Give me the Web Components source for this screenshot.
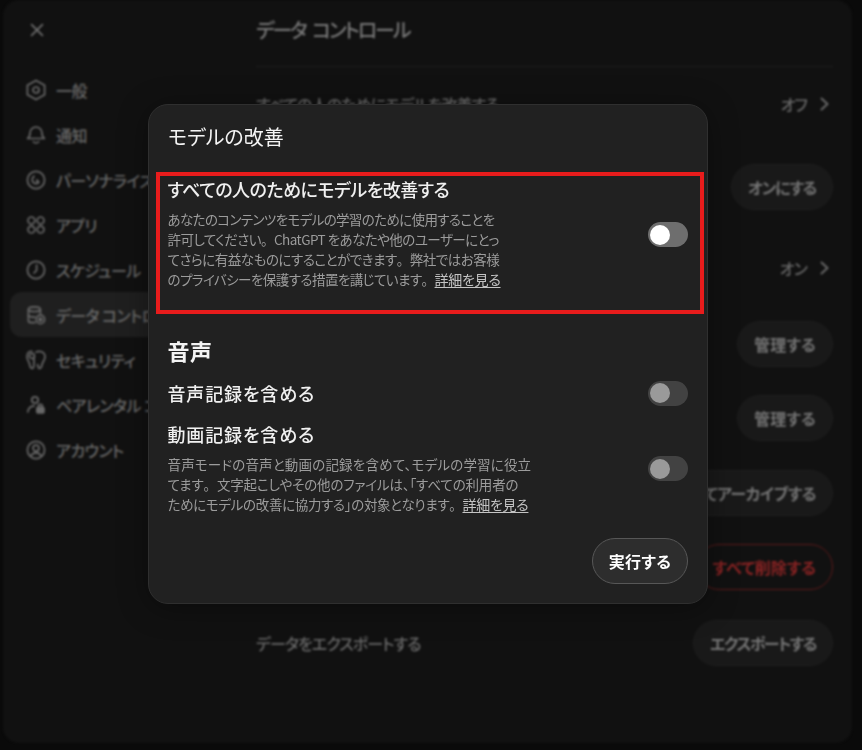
<!DOCTYPE html>
<html lang="ja">
<head>
<meta charset="utf-8">
<title>データ コントロール</title>
<style>
    html, body {
        margin: 0;
        height: 100%;
        background: #0a0a0a;
        overflow: hidden;
        font-family: "Noto Sans CJK JP", "Noto Sans", sans-serif;
        font-feature-settings: "palt";
    }
    a { font-size: 14px; letter-spacing: -.3px; color: #c4c4c4; text-decoration: underline; text-underline-offset: 2px; }
    /* each description line gets its own tracking, the kana run narrower than in Noto */
    .l1 { letter-spacing: -.63px; }
    .l2 { letter-spacing: -.53px; }
    .l3 { letter-spacing: -.48px; }
    .l4 { letter-spacing: -.55px; }
    .l5 { letter-spacing: .18px; }
    .l6 { letter-spacing: -.14px; }
    .l7 { letter-spacing: -.32px; }
    /* the full stop keeps its full width in the reference */
    .fw { font-feature-settings: "palt" 0; }
</style>
</head>
<body>
<app-screen>
    <settings-panel>
        <nav-item slot="nav" label="一般"><svg viewBox="0 0 20 20"><path d="M10 .4l8.6 4.8v9.6L10 19.6l-8.6-4.8V5.2z"/><circle cx="10" cy="10" r="3"/></svg></nav-item>
        <nav-item slot="nav" label="通知"><svg viewBox="0 0 20 20"><path d="M1.6 13.5c2-1.4 2.4-3 2.4-5.5a6 6 0 0 1 12 0c0 2.5.4 4.1 2.4 5.5z"/><path d="M7.3 16.8c1.4 1.6 4 1.6 5.4 0"/></svg></nav-item>
        <nav-item slot="nav" label="パーソナライズ"><svg viewBox="0 0 20 20"><circle cx="10" cy="10" r="8.6"/><path d="M8 6.2c-2.2 1.6-2.4 5-.3 6.6 1.6 1.2 3.8.9 5-.4M11 9.8v1.6h1.6"/></svg></nav-item>
        <nav-item slot="nav" label="アプリ"><svg viewBox="0 0 20 20"><circle cx="5.4" cy="5.4" r="3.4"/><circle cx="14.6" cy="5.4" r="3.4"/><circle cx="5.4" cy="14.6" r="3.4"/><circle cx="14.6" cy="14.6" r="3.4"/></svg></nav-item>
        <nav-item slot="nav" label="スケジュール"><svg viewBox="0 0 20 20"><circle cx="10" cy="10" r="8.6"/><path d="M10.6 5v5.4L8 13"/></svg></nav-item>
        <nav-item slot="nav" label="データ コントロ" active><svg viewBox="0 0 20 20"><path d="M9 17.6H5c-1.6 0-2.6-.8-2.6-2V4.4c0-1.6 2.4-2.6 6-2.6s6 1 6 2.6v3.8"/><path d="M2.4 5c1.4 2 10.6 2 12 0M2.4 10.5c1.2 1.4 4 1.8 6.4 1.6"/><circle cx="14.4" cy="14.4" r="4.2"/><circle cx="14.4" cy="14.4" r="1.4" fill="currentColor"/></svg></nav-item>
        <nav-item slot="nav" label="セキュリティ"><svg viewBox="0 0 20 20"><path d="M6 1.5C2.5 1 .8 3.5 1 7c.2 3 2 4.5 2.5 7 .4 2 1 4.5 2.7 4.5 1.6 0 1.8-3 1.8-5v-5"/><path d="M10 2c3-1.2 9-1 9 5 0 3-2.2 4.5-2.8 7-.5 2-.8 4.5-2.6 4.5-1.5 0-1.6-2.5-2-4"/><circle cx="6" cy="6" r="2.5"/></svg></nav-item>
        <nav-item slot="nav" label="ペアレンタル コ"><svg viewBox="0 0 20 20"><circle cx="9" cy="5" r="3.2"/><path d="M1.8 17c.4-3.6 3-6 6.4-6.2"/><rect x="10.8" y="12.4" width="7.2" height="5.6" rx="1.8" fill="currentColor"/><path d="M12.4 12.4v-1a2 2 0 0 1 4 0v1"/></svg></nav-item>
        <nav-item slot="nav" label="アカウント"><svg viewBox="0 0 20 20"><circle cx="10" cy="10" r="8.6"/><circle cx="10" cy="8.2" r="3"/><path d="M4.8 15.8c1.2-2.2 3-3 5.2-3s4 .8 5.2 3"/></svg></nav-item>

        <setting-row label="すべての人のためにモデルを改善する" value="オフ"></setting-row>
        <setting-row><pill-button style="--ls: -1.3px">オンにする</pill-button></setting-row>
        <setting-row value="オン"></setting-row>
        <setting-row><pill-button style="--ls: .25px">管理する</pill-button></setting-row>
        <setting-row><pill-button style="--ls: .25px">管理する</pill-button></setting-row>
        <setting-row><pill-button>すべてアーカイブする</pill-button></setting-row>
        <setting-row><pill-button danger>すべて削除する</pill-button></setting-row>
        <setting-row label="データをエクスポートする"><pill-button style="--ls: -1.5px">エクスポートする</pill-button></setting-row>
    </settings-panel>

    <model-dialog heading="モデルの改善">
        <highlight-box>
            <dialog-option heading="すべての人のためにモデルを改善する" style="--title-ls: -.5px" on>
                <span class="l1">あなたのコンテンツをモデルの学習のために使用することを</span><br><span class="l2">許可してください<span class="fw">。</span>ChatGPT をあなたや他のユーザーにとっ</span><br><span class="l3">てさらに有益なものにすることができます<span class="fw">。</span>弊社ではお客様</span><br><span class="l4">のプライバシーを保護する措置を講じています<span class="fw">。</span><a>詳細を見る</a></span>
            </dialog-option>
        </highlight-box>
        <voice-section heading="音声">
            <dialog-option heading="音声記録を含める" class="short" style="--title-ls: .85px"></dialog-option>
            <dialog-option heading="動画記録を含める" style="--title-ls: .85px; --text-pad: 2px">
                <span class="l5">音声モードの音声と動画の記録を含めて、モデルの学習に役立</span><br><span class="l6">てます<span class="fw">。</span>文字起こしやその他のファイルは、「すべての利用者の</span><br><span class="l7">ためにモデルの改善に協力する」の対象となります<span class="fw">。</span><a>詳細を見る</a></span>
            </dialog-option>
        </voice-section>
        <pill-button slot="footer" primary>実行する</pill-button>
    </model-dialog>
</app-screen>

<script>
function define(name, css, html, extra) {
    customElements.define(name, class extends HTMLElement {
        constructor() {
            super();
            const root = this.attachShadow({ mode: "open" });
            const tpl = document.createElement("template");
            tpl.innerHTML = `<style>${css}</style>${html}`;
            root.appendChild(tpl.content.cloneNode(true));
        }
        connectedCallback() {
            if (extra) extra(this, this.shadowRoot);
        }
    });
}

define("app-screen", `
    :host { display: block; position: relative; width: 862px; height: 750px; }
`, `<slot></slot>`);

define("settings-panel", `
    :host {
        display: grid;
        grid-template-columns: 253px 1fr;
        box-sizing: border-box;
        width: 849px;
        height: 743px;
        margin-left: 3px;
        background: #111111;
        border-radius: 16px;
        color: #767676;
        filter: blur(1px);
    }
    .side { padding: 0 0 0 7px; }
    .close { height: 67px; padding-left: 18px; display: flex; align-items: center; }
    .close svg { width: 18px; height: 18px; margin-top: -7px; fill: none; stroke: #6c6c6c; stroke-width: 2; stroke-linecap: round; }
    .main { padding: 0 19px 0 0; overflow: hidden; }
    h1 { margin: 0; height: 67px; box-sizing: border-box; padding-top: 14px; font-size: 20px; line-height: 32px; font-weight: 500; letter-spacing: -2.1px; word-spacing: 4px; color: #767676; border-bottom: 1px solid #1e1e1e; }
    .rows { display: grid; grid-template-rows: 74px 92px 70px 81px 68px 82px 66px 86px; }
`, `
    <div class="side">
        <div class="close"><svg viewBox="0 0 20 20"><path d="M4 4l12 12M16 4L4 16"/></svg></div>
        <slot name="nav"></slot>
    </div>
    <div class="main">
        <h1>データ コントロール</h1>
        <div class="rows"><slot></slot></div>
    </div>
`);

define("nav-item", `
    :host { display: flex; align-items: center; gap: 10px; height: 45px; padding-left: 16px; border-radius: 12px; font-size: 16px; font-weight: 500; letter-spacing: -.6px; color: #686868; white-space: nowrap; overflow: hidden; }
    :host([active]) { background: #1f1f1f; }
    ::slotted(svg) { width: 20px; height: 20px; flex: none; overflow: visible; fill: none; stroke: currentColor; stroke-width: 1.7; stroke-linejoin: round; stroke-linecap: round; }
`, `<slot></slot><span></span>`, (el, root) => {
    root.querySelector("span").textContent = el.getAttribute("label");
});

define("setting-row", `
    :host { display: flex; align-items: center; font-size: 16px; font-weight: 500; letter-spacing: -.9px; color: #686868; white-space: nowrap; }
    .label { margin-right: auto; }
    .value { display: flex; align-items: center; gap: 13px; margin-right: 4px; }
    .value svg { width: 9px; height: 14px; fill: none; stroke: currentColor; stroke-width: 2; stroke-linecap: round; stroke-linejoin: round; }
    .value:empty { display: none; }
    .end { display: flex; letter-spacing: normal; }
`, `
    <span class="label"></span>
    <span class="value"></span>
    <span class="end"><slot></slot></span>
`, (el, root) => {
    root.querySelector(".label").textContent = el.getAttribute("label") || "";
    const v = el.getAttribute("value");
    if (v) {
        root.querySelector(".value").innerHTML = `${v}<svg viewBox="0 0 9 14"><path d="M1.5 1.5L7.5 7l-6 5.5"/></svg>`;
    }
});

define("pill-button", `
    :host { display: inline-flex; align-items: center; justify-content: center; box-sizing: border-box; height: 46px; padding: 0 16px; border-radius: 23px; border: 1px solid #1e1e1e; background: #191919; color: #747474; font-size: 16px; font-weight: 600; letter-spacing: var(--ls, -.5px); white-space: nowrap; }
    :host([danger]) { background: #111; border: 1.5px solid #5c1a1a; color: #8a2323; letter-spacing: 0; }
    :host([primary]) { width: 96px; padding: 0; background: #2d2d2d; border-color: #575757; color: #fff; letter-spacing: .4px; }
`, `<slot></slot>`);

define("model-dialog", `
    :host {
        position: absolute;
        left: 148px;
        top: 104px;
        display: flex;
        flex-direction: column;
        box-sizing: border-box;
        width: 560px;
        height: 500px;
        padding-bottom: 19px;
        background: #212121;
        border: 1px solid #2f2f2f;
        border-radius: 20px;
        box-shadow: 0 4px 30px rgba(0, 0, 0, .35);
        color: #fff;
    }
    h2 { margin: 0; height: 67px; box-sizing: border-box; padding: 17px 0 0 19px; font-size: 20px; line-height: 30px; font-weight: 400; color: #f4f4f4; }
    .footer { margin-top: auto; padding-right: 19px; display: flex; justify-content: flex-end; }
`, `
    <h2></h2>
    <slot></slot>
    <div class="footer"><slot name="footer"></slot></div>
`, (el, root) => {
    root.querySelector("h2").textContent = el.getAttribute("heading");
});

define("highlight-box", `
    :host { display: block; box-sizing: border-box; height: 142px; margin: 0 3px 0 7px; padding: 0 12px 0 7.5px; border: 4px solid #e81c1c; }
`, `<slot></slot>`);

define("voice-section", `
    :host { display: block; padding: 22px 19px 0 18.5px; }
    h3 { margin: 0 0 16px; font-size: 22px; line-height: 28px; font-weight: 600; letter-spacing: .5px; color: #f4f4f4; }
    .list { display: flex; flex-direction: column; gap: 15px; }
`, `
    <h3></h3>
    <div class="list"><slot></slot></div>
`, (el, root) => {
    root.querySelector("h3").textContent = el.getAttribute("heading");
});

define("dialog-option", `
    :host { display: flex; align-items: center; justify-content: space-between; color: #f4f4f4; }
    .text { padding-bottom: var(--text-pad, 4px); }
    .title { font-size: 18px; line-height: 26px; font-weight: 500; letter-spacing: var(--title-ls, 0); color: #f0f0f0; white-space: nowrap; }
    .desc { margin-top: 7px; font-size: 13.5px; line-height: 20px; color: #9c9c9c; white-space: nowrap; }
    :host(.short) .text { padding-bottom: 0; }
    .toggle { flex: none; box-sizing: border-box; width: 40px; height: 25px; padding: 2.5px 2px; border-radius: 13px; background: #424242; }
    .knob { width: 20px; height: 20px; border-radius: 50%; background: #9a9a9a; }
    :host([on]) .toggle { background: #6e6e6e; }
    :host([on]) .knob { background: #fff; }
`, `
    <div class="text">
        <div class="title"></div>
        <div class="desc"><slot></slot></div>
    </div>
    <div class="toggle"><div class="knob"></div></div>
`, (el, root) => {
    root.querySelector(".title").textContent = el.getAttribute("heading");
    if (!el.textContent.trim()) root.querySelector(".desc").style.display = "none";
});
</script>
</body>
</html>
